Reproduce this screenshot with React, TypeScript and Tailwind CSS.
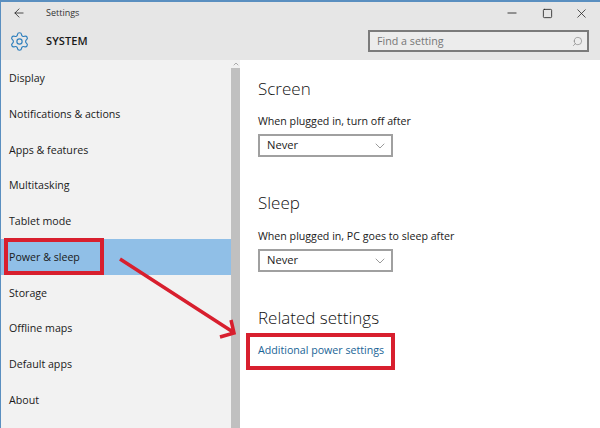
import { ArrowLeft, ChevronDown, ChevronUp, Minus, Search, Settings, Square, X } from "lucide-react";

const items = [
  "Display",
  "Notifications & actions",
  "Apps & features",
  "Multitasking",
  "Tablet mode",
  "Power & sleep",
  "Storage",
  "Offline maps",
  "Default apps",
  "About",
];

function PowerSelect() {
  return (
    <div className="mt-[5px] flex h-[23px] w-[135px] items-center justify-between border-2 border-[#a0a0a0] bg-white pl-[7px] pr-[3px] text-[11.2px] text-[#222]">
      Never
      <ChevronDown className="h-4 w-4 text-[#666]" strokeWidth={1} />
    </div>
  );
}

export default function App() {
  return (
    <div className="relative h-[428px] w-[600px] overflow-hidden border-t-2 border-l border-[#5a8fc0] bg-white font-['Open_Sans','Noto_Sans',sans-serif] text-[#1a1a1a]">
      <header className="h-[58px] bg-[#e6e6e6]">
        <div className="flex h-[22px] items-center">
          <ArrowLeft className="ml-[11px] h-[14px] w-[14px]" strokeWidth={1.3} />
          <span className="ml-[20px] text-[9px] text-[#333]">Settings</span>
          <div className="ml-auto mr-[8px] flex items-center text-[#222]">
            <Minus className="mr-[23px] h-[14px] w-[14px]" strokeWidth={1.5} />
            <Square className="mr-[21px] h-[11px] w-[11px]" strokeWidth={1.8} />
            <X className="mr-[3px] h-[15px] w-[15px]" strokeWidth={1.2} />
          </div>
        </div>
        <div className="flex h-[34px] items-center">
          <Settings className="ml-[8px] h-[21px] w-[21px] text-[#2e7fbd]" strokeWidth={1.3} />
          <span className="ml-[16px] text-[11px] font-semibold tracking-[0.1px]">SYSTEM</span>
          <div className="ml-auto mr-[11px] flex h-[22px] w-[221px] items-center justify-between border-2 border-[#7b7b7b] bg-[#ececec] pl-[7px] pr-[4px] text-[10.7px] text-[#777]">
            Find a setting
            <Search className="h-[11px] w-[11px] -scale-x-100 text-[#777]" strokeWidth={1.3} />
          </div>
        </div>
      </header>
      <div className="flex h-[368px]">
        <nav className="w-[230px] bg-[#f2f2f2]">
          {items.map((item) => (
            <div
              key={item}
              className={`flex h-[35.8px] items-center pl-[8px] pt-[2px] text-[10.65px] ${item === "Power & sleep" ? "bg-[#90bfe7]" : ""}`}
            >
              {item}
            </div>
          ))}
        </nav>
        <div className="flex w-[9px] flex-col bg-[#f2f2f2]">
          <div className="flex h-[8px] items-center justify-center">
            <ChevronUp className="h-[8px] w-[8px] text-[#666]" strokeWidth={1.5} />
          </div>
          <div className="flex-1 bg-[#c0c0c0]" />
        </div>
        <main className="pl-[18px] pt-[17px]">
          <h2 className="text-[17px] font-light leading-[24px] text-[#111]">Screen</h2>
          <p className="mt-[12px] text-[10.65px] leading-[16px]">When plugged in, turn off after</p>
          <PowerSelect />
          <h2 className="mt-[34px] text-[17px] font-light leading-[24px] text-[#111]">Sleep</h2>
          <p className="mt-[13px] text-[10.65px] leading-[16px]">When plugged in, PC goes to sleep after</p>
          <PowerSelect />
          <h2 className="mt-[34px] text-[17px] font-light leading-[24px] text-[#111]">Related settings</h2>
          <p className="mt-[12px] text-[10.65px] leading-[16px] text-[#1a6496]">Additional power settings</p>
        </main>
      </div>
      {/* annotations */}
      <div className="absolute left-[3px] top-[236px] h-[37px] w-[100px] border-[4px] border-[#d81f2e]" />
      <div className="absolute left-[245px] top-[331px] h-[37px] w-[149px] border-[4px] border-[#d81f2e]" />
      <svg className="absolute left-[-1px] top-[-2px]" width="600" height="428" viewBox="0 0 600 428">
        <path d="M120 259 L233 332 M220 337 L234 333 L231 320" fill="none" stroke="#d81f2e" strokeWidth="3.5" />
      </svg>
    </div>
  );
}
